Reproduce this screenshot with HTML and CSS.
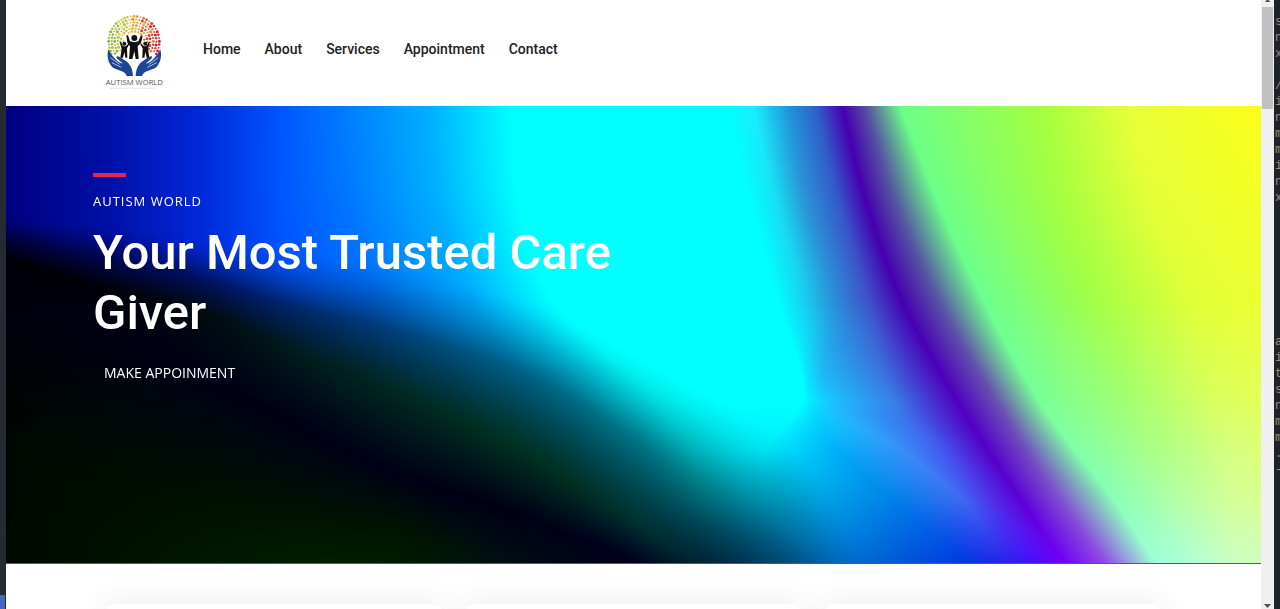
FILE: index.html
```html
<!DOCTYPE html>
<html lang="en">
<head>
<meta charset="utf-8">
<title>Autism World</title>
<link rel="stylesheet" href="styles.css">
</head>
<body>
<div class="desk-left"><span class="desk-status"></span></div>
<div class="page">
  <header class="header">
    <a class="logo" href="#" aria-label="Autism World">
      <svg class="logo-art" viewBox="0 0 240 285">
        <g id="dots"></g>
        <g fill="#1b4596">
          <path d="M40 133c-5 20-1 37 9 50 10 14 33 10 43 24l3 6h19c-1-24-10-38-25-47-8-6-20-16-24-11-3 6 13 13 18 21-15-4-30-18-43-43z"/>
          <path d="M196 133c5 20 1 37-9 50-10 14-33 10-43 24l-3 6h-19c1-24 10-38 25-47 8-6 20-16 24-11 3 6-13 13-18 21 15-4 30-18 43-43z"/>
        </g>
        <g fill="none" stroke="#fff" stroke-width="2"><path d="M46 158l28 20M51 173l28 14M190 158l-28 20M185 173l-28 14"/></g>
        <g fill="#111">
          <circle cx="118" cy="99" r="9"/>
          <path d="M94 91l5 0 6 18q13 5 25 0l8-18 5 1-5 22-10 10 3 38h-9l-4-23-6 23h-10l3-38-8-11z"/>
          <circle cx="88" cy="116" r="6"/>
          <path d="M74 111l4 0 5 11q6 3 11 0l7-7 2 3-7 12 1 28h-6l-3-17-4 17h-8l4-28z"/>
          <circle cx="151" cy="116" r="6"/>
          <path d="M165 111l-4 0-5 11q-6 3-11 0l-7-7-2 3 7 12-1 28h6l3-17 4 17h8l-4-28z"/>
        </g>
        <text class="logo-name" x="118" y="239" text-anchor="middle">AUTISM WORLD</text>
        <path d="M46 250h58M110 250h72" stroke="#c9c9c9" stroke-width="2" stroke-dasharray="5 2"/>
      </svg>
    </a>
    <nav class="nav">
      <a href="#">Home</a>
      <a href="#">About</a>
      <a href="#">Services</a>
      <a href="#">Appointment</a>
      <a href="#">Contact</a>
    </nav>
  </header>
  <section class="hero">
    <canvas class="hero-art" id="art" width="1255" height="458"></canvas>
    <div class="hero-copy">
      <span class="rule"></span>
      <p class="eyebrow">AUTISM WORLD</p>
      <h1 class="title">Your Most Trusted Care Giver</h1>
      <a class="cta" href="#">MAKE APPOINMENT</a>
    </div>
  </section>
  <section class="cards">
    <div class="card"></div>
    <div class="card"></div>
    <div class="card"></div>
  </section>
</div>
<div class="scrollbar">
  <svg class="arrow" viewBox="0 0 13 7"><path d="M4 2l2.500-3 3 3z" fill="#505050"/></svg>
  <span class="thumb"></span>
  <svg class="arrow" viewBox="0 0 13 7"><path d="M3 2h7l-3.500 4z" fill="#505050"/></svg>
</div>
<pre class="desk-right">s
n
x

/
i
n
m
m
i
n
x








a
i
t
s
n
m
m
.
-</pre>
<script src="art.js"></script>
</body>
</html>
```
FILE: styles.css
```css
* { box-sizing: border-box; }
body {
  margin: 0;
  height: 100vh;
  display: flex;
  overflow: hidden;
  background: #fff;
  font-family: "Open Sans", "Noto Sans", sans-serif;
}
a { text-decoration: none; }
.desk-left {
  width: 6px;
  flex: none;
  display: flex;
  align-items: flex-end;
  background: #262a33;
}
.desk-status { width: 5px; height: 14px; background: #4169c4; }
.page { flex: 1; min-width: 0; overflow: hidden; }
.header {
  display: flex;
  align-items: flex-start;
  gap: 28px;
  padding: 5px 89px 6px;
}
.logo { display: block; }
.logo-art { display: block; width: 80px; height: 95px; }
.logo-name { font: 23px "Open Sans", sans-serif; fill: #555; }
.nav { display: flex; gap: 24px; padding-top: 34px; }
.nav a {
  font: 500 14px/20px Roboto, sans-serif;
  color: #222;
}
.hero { position: relative; padding: 67px 87px 180px; border-bottom: 1px solid #52605c; }
.hero-art { position: absolute; inset: 0; width: 100%; height: 100%; }
.hero-copy { position: relative; max-width: 580px; color: #fff; }
.rule { display: block; width: 33px; height: 4px; background: #e3264f; }
.eyebrow {
  margin: 14px 0 12px;
  font-size: 13px;
  line-height: 20px;
  letter-spacing: 1px;
}
.title {
  margin: 0;
  font: 500 49px/60px Roboto, sans-serif;
}
.cta {
  display: inline-block;
  margin-top: 20px;
  padding: 0 11px;
  font-size: 14px;
  line-height: 20px;
  color: #fff;
}
.cards {
  display: grid;
  grid-template-columns: repeat(3, 1fr);
  gap: 24px;
  padding: 40px 100px 0;
}
.card {
  height: 200px;
  border-radius: 8px;
  background: #fff;
  box-shadow: 0 0 30px rgba(30, 50, 90, 0.1);
}
.scrollbar {
  width: 13px;
  flex: none;
  display: flex;
  flex-direction: column;
  background: #f0f0f0;
}
.arrow { display: block; width: 13px; height: 7px; }
.thumb { flex: 0 0 102px; margin: 0 1px auto; background: #c1c1c1; }
.desk-right {
  width: 6px;
  flex: none;
  margin: 0;
  padding: 14px 0 0 1px;
  overflow: hidden;
  background: #1d222c;
  color: #a98d66;
  font: 12px/16px "Liberation Mono", monospace;
}
```
FILE: art.js
```js
// Hero artwork: a colour field of matched gradient stops, with a dark veil over it.
const OX = 6, OY = 106;
const hex = s => [0, 2, 4].map(i => parseInt(s.substr(i, 2), 16));

// y, then pairs of x position and colour
const rows = [
  [106, "6 000080 110 0010a8 200 0028d8 280 0055ff 350 0080ff 430 00b0ff 512 00ffff 725 00ffff 752 18f0ff 790 2090d8 815 3060c8 842 4600b0 865 5550a0 900 6cff88 1040 a4ff40 1130 e8ff38 1261 fbff18"],
  [200, "6 000080 110 0010a8 200 0028d8 280 0055ff 350 0078ff 438 00b0ff 518 00ffff 750 00ffff 775 18e0f4 803 2a98d8 838 3458c8 865 4600b0 895 5558a0 937 6cff88 1060 a4ff40 1150 e4ff38 1261 f4ff24"],
  [300, "6 000080 110 0010a8 200 0028d8 290 0055ff 375 0070ff 470 00a8ff 552 00ffff 777 00ffff 803 18d0f0 832 2a90d8 868 4050c8 901 4400b0 938 5854a4 983 6cff90 1090 a0ff48 1190 e0ff38 1261 ecff30"],
  [400, "6 000080 110 0010a8 200 0028d8 310 0060e0 420 0090ff 540 00b8ff 655 00ffff 803 00ffff 811 08e8ff 828 18c8ff 893 3880e8 956 5000c0 995 6850b0 1038 78ff98 1130 a4ff70 1211 d8ff60 1261 e4ff58"],
  [450, "6 000080 110 0010a8 200 0028d8 320 0060e0 440 0090f0 570 00c0ff 690 00f4ff 765 00f0ff 836 00b0f8 901 3890f8 942 4458f0 987 5400c8 1024 7048c0 1074 80ffa8 1150 a8ff88 1225 d4ff80 1261 dcff78"],
  [500, "6 000080 110 0010a8 200 0028d8 320 0060e0 460 0090f0 590 00c0ff 700 00e0f0 783 00b8e4 893 0080e8 962 4068f4 991 5030e8 1020 5c00d8 1060 8050d0 1113 88ffb8 1170 b0ffa8 1232 d4ff98 1261 d8ff90"],
  [564, "6 000080 110 0010a8 200 0028d8 320 0060e0 480 0090f0 600 00b0f0 720 00a0e0 860 0068d0 967 0038e0 1007 2820ec 1040 5008fc 1064 7000f8 1105 9048e8 1156 a0ffd8 1191 b0ffd8 1228 c8ffc8 1261 d0ffc0"]
].map(parse);

// x, then y position, colour and opacity
const veil = [
  [6, "215 000010 0 238 000010 .6 258 000008 1 300 00000c 1 450 000600 1 564 000800 1"],
  [100, "224 000010 0 257 000010 .6 287 000008 1 325 000012 1 480 000c00 1 564 001000 1"],
  [204, "240 000010 0 280 000010 .6 313 000c10 1 375 000014 1 500 001000 1 564 001800 1"],
  [300, "252 000810 0 308 000810 .6 355 001c1c 1 425 000016 1 520 001400 1 570 002000 1"],
  [400, "266 001010 0 332 001010 .55 395 002820 1 475 000016 1 535 001600 1 580 002000 1"],
  [500, "292 001010 0 362 001010 .5 440 003020 1 508 000014 1 565 001010 1 620 001010 1"],
  [560, "314 001010 0 390 001010 .5 475 003020 1 532 000018 1 600 001010 1 660 001010 1"],
  [640, "358 001010 0 440 001010 .5 527 003030 1 565 000020 1 650 001010 1 700 001010 1"],
  [740, "412 001010 0 495 001018 .35 590 002038 1 640 000020 1 700 001010 1 760 001010 1"],
  [800, "450 001010 0 545 001018 .3 660 002038 1 720 000020 1 780 001010 1 840 001010 1"],
  [870, "560 001010 0 660 001018 .3 760 002038 1 820 000020 1 880 001010 1 940 001010 1"],
  [1261, "900 001010 0 1000 001018 .3 1100 002038 1 1160 000020 1 1200 001010 1 1300 001010 1"]
].map(([at, s]) => {
  const t = s.split(" "), stops = [];
  for (let i = 0; i < t.length; i += 3) stops.push([+t[i], ...hex(t[i + 1]), +t[i + 2]]);
  return { at, stops };
});

function parse([at, s]) {
  const t = s.split(" "), stops = [];
  for (let i = 0; i < t.length; i += 2) stops.push([+t[i], ...hex(t[i + 1]), 1]);
  return { at, stops };
}

// Stops at a position between two keys: a smooth curve for place, a mix for colour.
function stopsAt(keys, v) {
  let i = 0;
  while (i < keys.length - 2 && v > keys[i + 1].at) i++;
  const a = keys[i], b = keys[i + 1], p = keys[i - 1] || a, n = keys[i + 2] || b;
  const d = b.at - a.at, t = Math.min(1, Math.max(0, (v - a.at) / d));
  const t2 = t * t, t3 = t2 * t;
  return a.stops.map((s, k) => {
    const e = b.stops[k];
    const m0 = (e[0] - p.stops[k][0]) / (b.at - p.at) * d;
    const m1 = (n.stops[k][0] - s[0]) / (n.at - a.at) * d;
    const pos = (2 * t3 - 3 * t2 + 1) * s[0] + (t3 - 2 * t2 + t) * m0 + (3 * t2 - 2 * t3) * e[0] + (t3 - t2) * m1;
    return [pos, ...[1, 2, 3, 4].map(c => s[c] + (e[c] - s[c]) * t)];
  });
}

function colourAt(stops, v) {
  if (v <= stops[0][0]) return stops[0];
  for (let i = 1; i < stops.length; i++) {
    if (v < stops[i][0]) {
      const a = stops[i - 1], b = stops[i];
      let t = (v - a[0]) / (b[0] - a[0]);
      if (a[4] === 0) t = Math.pow(t, 1.4);
      return a.map((q, c) => q + (b[c] - q) * t);
    }
  }
  return stops[stops.length - 1];
}

const canvas = document.getElementById("art");
const ctx = canvas.getContext("2d");
const img = ctx.createImageData(canvas.width, canvas.height);
const columns = Array.from({ length: canvas.width }, (_, x) => stopsAt(veil, x + OX));
for (let y = 0; y < canvas.height; y++) {
  const row = stopsAt(rows, y + OY);
  for (let x = 0; x < canvas.width; x++) {
    const c = colourAt(row, x + OX), v = colourAt(columns[x], y + OY), o = (y * canvas.width + x) * 4;
    for (let k = 0; k < 3; k++) img.data[o + k] = c[k + 1] * (1 - v[4]) + v[k + 1] * v[4];
    img.data[o + 3] = 255;
  }
}
ctx.putImageData(img, 0, 0);

// Logo mosaic: rings of tiles from green through orange to red.
const dots = document.getElementById("dots");
const tints = ["#8cb63c", "#a9c64a", "#d9cc45", "#eeb23c", "#e8853a", "#dc4038", "#cc2436"];
for (let ring = 0; ring < 7; ring++) {
  const r = 76 - ring * 9, count = Math.round(r / 2.4);
  for (let i = 0; i <= count; i++) {
    const a = Math.PI * (1.16 - 1.32 * i / count) + (ring % 2) * 0.06;
    const x = 117 + r * Math.cos(a), y = 110 - r * Math.sin(a);
    if (Math.abs(x - 117) < 30 && y > 88) continue;
    const t = (x - 40) / 156 * 6 + ((i * 7 + ring * 3) % 3 - 1) * 0.7;
    const c = document.createElementNS("http://www.w3.org/2000/svg", "circle");
    c.setAttribute("cx", x.toFixed(1));
    c.setAttribute("cy", y.toFixed(1));
    c.setAttribute("r", 2.9 + (i * 5 + ring) % 3 * 0.8);
    c.setAttribute("fill", tints[Math.min(6, Math.max(0, Math.round(t)))]);
    dots.append(c);
  }
}
```
